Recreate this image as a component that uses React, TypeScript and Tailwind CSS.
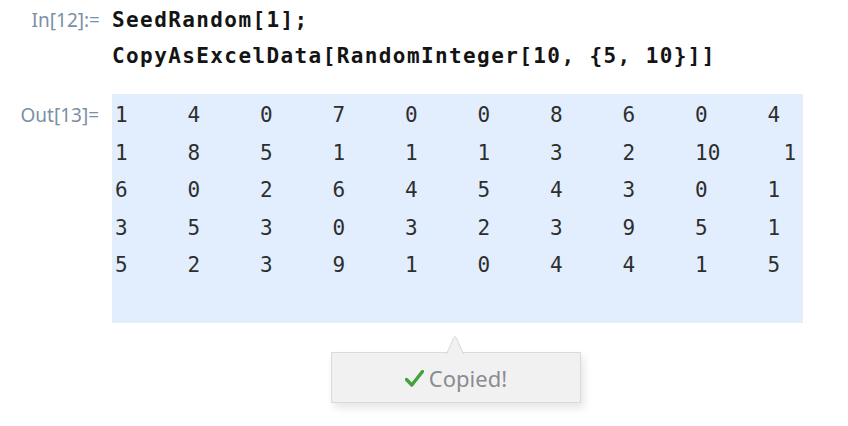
import React from "react";

const rows: string[][] = [
  ["1", "4", "0", "7", "0", "0", "8", "6", "0", "4"],
  ["1", "8", "5", "1", "1", "1", "3", "2", "10", "1"],
  ["6", "0", "2", "6", "4", "5", "4", "3", "0", "1"],
  ["3", "5", "3", "0", "3", "2", "3", "9", "5", "1"],
  ["5", "2", "3", "9", "1", "0", "4", "4", "1", "5"],
];

const mono = { fontFamily: '"DejaVu Sans Mono", monospace' };

export default function App() {
  return (
    <div className="relative w-[848px] h-[426px] bg-white overflow-hidden">
      {/* Input cell */}
      <div className="flex items-baseline pt-[2px]">
        <div className="w-[100px] shrink-0 text-right text-[19px] text-[#7a90a4] font-['Noto_Sans',sans-serif]">
          In[12]:=
        </div>
        <div
          className="ml-[12px] text-[21px] leading-[36px] font-bold tracking-[1.4px] text-[#141414] font-['DejaVu_Sans_Mono',monospace]"
        >
          <div>SeedRandom[1];</div>
          <div>CopyAsExcelData[RandomInteger[10, {"{"}5, 10{"}"}]]</div>
        </div>
      </div>

      {/* Output cell */}
      <div className="flex items-baseline mt-[20px]">
        <div className="w-[99px] shrink-0 text-right text-[19px] text-[#7a90a4] font-['Noto_Sans',sans-serif]">
          Out[13]=
        </div>
        <div className="ml-[13px] w-[691px] h-[229px] bg-[#e2eefd] pt-[3px] pl-[3px] text-[21px] leading-[37.5px] text-[#2e2e2e] font-['DejaVu_Sans_Mono',monospace]">
          {rows.map((r, i) => (
            <div key={i} className="flex">
              {r.map((v, j) => (
                <div
                  key={j}
                  className={
                    i === 1 && j === 9
                      ? "w-[72.5px] shrink-0 pl-[16px]"
                      : "w-[72.5px] shrink-0"
                  }
                >
                  {v}
                </div>
              ))}
            </div>
          ))}
        </div>
      </div>

      {/* Copied toast */}
      <div className="absolute left-[331px] top-[352px] w-[250px] h-[51px] bg-[#f1f1f1] border border-[#dadada] shadow-[3px_5px_8px_rgba(0,0,0,0.10)] flex items-center justify-center gap-[5px]">
        <svg
          className="absolute left-[114px] top-[-17px]"
          width="18"
          height="18"
          viewBox="0 0 18 18"
        >
          <path
            d="M0.5 18 L7.8 1.6 Q9 -0.4 10.2 1.6 L17.5 18"
            fill="#f1f1f1"
            stroke="#d8d8d8"
            strokeWidth="1"
          />
        </svg>
        <svg width="19" height="17" viewBox="0 0 19 17" className="mt-[2px]">
          <path
            d="M1.5 9.5 L6.8 15 L17.5 1.5"
            fill="none"
            stroke="#41a33a"
            strokeWidth="3.4"
            strokeLinecap="round"
            strokeLinejoin="round"
          />
        </svg>
        <span className="text-[22px] text-[#8a8c92] font-['Noto_Sans',sans-serif] leading-none">
          Copied!
        </span>
      </div>
    </div>
  );
}
